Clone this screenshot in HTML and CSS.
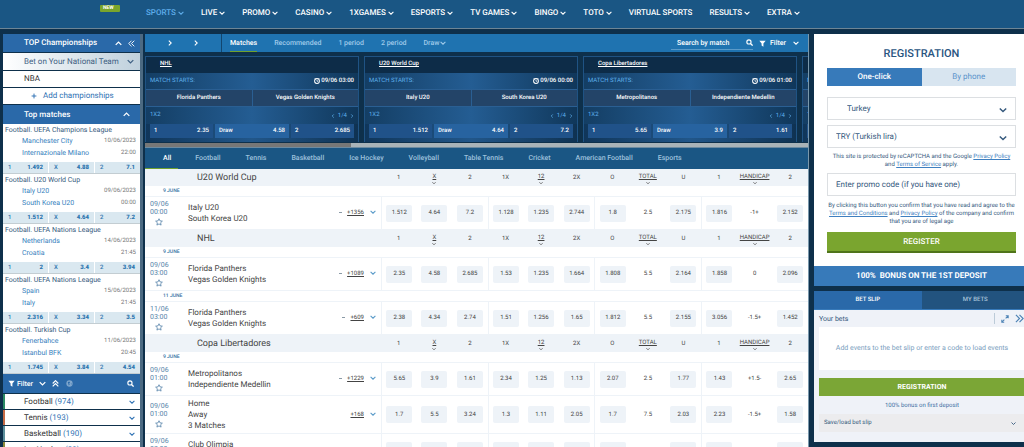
FILE: index.html
```html
<!DOCTYPE html>
<html lang="en">
<head>
<meta charset="utf-8">
<title>Sports betting</title>
<link rel="stylesheet" href="styles.css">
</head>
<body>
<svg class="sprite" aria-hidden="true">
  <symbol id="down" viewBox="0 0 10 10"><path d="M1 3l4 4 4-4" fill="none" stroke="currentColor" stroke-width="1.8"/></symbol>
  <symbol id="up" viewBox="0 0 10 10"><path d="M1 7l4-4 4 4" fill="none" stroke="currentColor" stroke-width="1.8"/></symbol>
  <symbol id="left" viewBox="0 0 10 10"><path d="M7 1L3 5l4 4" fill="none" stroke="currentColor" stroke-width="1.8"/></symbol>
  <symbol id="right" viewBox="0 0 10 10"><path d="M3 1l4 4-4 4" fill="none" stroke="currentColor" stroke-width="1.8"/></symbol>
  <symbol id="dleft" viewBox="0 0 10 10"><path d="M5 1L1 5l4 4M9 1L5 5l4 4" fill="none" stroke="currentColor" stroke-width="1.3"/></symbol>
  <symbol id="dright" viewBox="0 0 10 10"><path d="M1 1l4 4-4 4M5 1l4 4-4 4" fill="none" stroke="currentColor" stroke-width="1.3"/></symbol>
  <symbol id="dup" viewBox="0 0 10 10"><path d="M1 5l4-4 4 4M1 9l4-4 4 4" fill="none" stroke="currentColor" stroke-width="1.7"/></symbol>
  <symbol id="search" viewBox="0 0 10 10"><circle cx="4.2" cy="4.2" r="3" fill="none" stroke="currentColor" stroke-width="1.6"/><path d="M6.4 6.4L9.4 9.4" stroke="currentColor" stroke-width="1.8"/></symbol>
  <symbol id="funnel" viewBox="0 0 10 10"><path d="M.5 1h9L6.3 5v4.6L3.7 8V5z" fill="currentColor"/></symbol>
  <symbol id="clock" viewBox="0 0 10 10"><circle cx="5" cy="5" r="4" fill="none" stroke="currentColor" stroke-width="1.7"/><path d="M5 2.5V5.4H7M1 1l1.5 0M9 1H7.5" fill="none" stroke="currentColor" stroke-width="1.3"/></symbol>
  <symbol id="star" viewBox="0 0 10 10"><path d="M5 .9l1.25 2.7 2.95.35-2.2 2 .6 2.9L5 7.4 2.4 8.85l.6-2.9-2.2-2 2.95-.35z" fill="none" stroke="currentColor" stroke-width="1"/></symbol>
  <symbol id="globe" viewBox="0 0 10 10"><circle cx="5" cy="5" r="4.5" fill="currentColor"/><path d="M2.4 3.2l2.2-1 1.2 1.3-1.3 1.4.8 1.6-1.4 1.3-.5-2.3zM6.8 4.8l1.4.4-.7 1.6z" fill="#2a69a9"/></symbol>
  <symbol id="expand" viewBox="0 0 10 10"><path d="M6 1h3v3M9 1L5.8 4.2M4 9H1V6M1 9l3.2-3.2" fill="none" stroke="currentColor" stroke-width="1.3"/></symbol>
  <symbol id="plus" viewBox="0 0 10 10"><path d="M5 1v8M1 5h8" stroke="currentColor" stroke-width="1.6"/></symbol>
</svg>

<header class="top">
  <div class="brand"><span class="new">NEW</span></div>
  <nav class="nav">
    <a href="#" class="on">SPORTS<svg><use href="#down"/></svg></a>
    <a href="#">LIVE<svg><use href="#down"/></svg></a>
    <a href="#">PROMO<svg><use href="#down"/></svg></a>
    <a href="#">CASINO<svg><use href="#down"/></svg></a>
    <a href="#">1XGAMES<svg><use href="#down"/></svg></a>
    <a href="#">ESPORTS<svg><use href="#down"/></svg></a>
    <a href="#">TV GAMES<svg><use href="#down"/></svg></a>
    <a href="#">BINGO<svg><use href="#down"/></svg></a>
    <a href="#">TOTO<svg><use href="#down"/></svg></a>
    <a href="#">VIRTUAL SPORTS</a>
    <a href="#">RESULTS<svg><use href="#down"/></svg></a>
    <a href="#">EXTRA<svg><use href="#down"/></svg></a>
  </nav>
</header>

<div class="page">
  <aside class="side">
    <div class="side-head"><h2>TOP Championships</h2><button aria-label="Collapse"><svg><use href="#up"/></svg></button><button aria-label="Hide panel"><svg><use href="#dleft"/></svg></button></div>
    <button class="champ national"><span>Bet on Your National Team</span><svg><use href="#down"/></svg></button>
    <a href="#" class="champ">NBA</a>
    <button class="champ add"><svg><use href="#plus"/></svg>Add championships</button>
    <div class="side-head matches-head"><h2>Top matches</h2><button aria-label="Collapse"><svg><use href="#up"/></svg></button></div>

    <section class="match">
      <h3>Football. UEFA Champions League</h3>
      <div class="pair"><a href="#">Manchester City</a><span>10/06/2023</span></div>
      <div class="pair"><a href="#">Internazionale Milano</a><span>22:00</span></div>
      <div class="strip"><button><i>1</i><b>1.492</b></button><button><i>X</i><b>4.88</b></button><button><i>2</i><b>7.1</b></button></div>
    </section>
    <section class="match">
      <h3>Football. U20 World Cup</h3>
      <div class="pair"><a href="#">Italy U20</a><span>09/06/2023</span></div>
      <div class="pair"><a href="#">South Korea U20</a><span>00:00</span></div>
      <div class="strip"><button><i>1</i><b>1.512</b></button><button><i>X</i><b>4.64</b></button><button><i>2</i><b>7.2</b></button></div>
    </section>
    <section class="match">
      <h3>Football. UEFA Nations League</h3>
      <div class="pair"><a href="#">Netherlands</a><span>14/06/2023</span></div>
      <div class="pair"><a href="#">Croatia</a><span>21:45</span></div>
      <div class="strip"><button><i>1</i><b>2</b></button><button><i>X</i><b>3.4</b></button><button><i>2</i><b>3.94</b></button></div>
    </section>
    <section class="match">
      <h3>Football. UEFA Nations League</h3>
      <div class="pair"><a href="#">Spain</a><span>15/06/2023</span></div>
      <div class="pair"><a href="#">Italy</a><span>21:45</span></div>
      <div class="strip"><button><i>1</i><b>2.316</b></button><button><i>X</i><b>3.34</b></button><button><i>2</i><b>3.5</b></button></div>
    </section>
    <section class="match">
      <h3>Football. Turkish Cup</h3>
      <div class="pair"><a href="#">Fenerbahce</a><span>11/06/2023</span></div>
      <div class="pair"><a href="#">Istanbul BFK</a><span>20:45</span></div>
      <div class="strip"><button><i>1</i><b>1.745</b></button><button><i>X</i><b>3.84</b></button><button><i>2</i><b>4.54</b></button></div>
    </section>

    <div class="side-filter">
      <button><svg><use href="#funnel"/></svg>Filter</button>
      <button aria-label="Open filter"><svg><use href="#down"/></svg></button>
      <button aria-label="Collapse all"><svg><use href="#dup"/></svg></button>
      <button aria-label="Regions" class="globe"><svg><use href="#globe"/></svg></button>
      <button aria-label="Search" class="find"><svg><use href="#search"/></svg></button>
    </div>
    <button class="sport green"><span>Football <em>(974)</em></span><svg><use href="#down"/></svg></button>
    <button class="sport orange"><span>Tennis <em>(193)</em></span><svg><use href="#down"/></svg></button>
    <button class="sport teal"><span>Basketball <em>(190)</em></span><svg><use href="#down"/></svg></button>
    <button class="sport olive"><span>Ice Hockey <em>(29)</em></span><svg><use href="#down"/></svg></button>
  </aside>

  <main class="main">
    <div class="bar">
      <div class="arrows"><button aria-label="Next"><svg><use href="#right"/></svg></button><button aria-label="Last"><svg><use href="#right"/></svg></button></div>
      <nav class="periods">
        <a href="#" class="on">Matches</a><a href="#">Recommended</a><a href="#">1 period</a><a href="#">2 period</a><a href="#">Draw<svg><use href="#down"/></svg></a>
      </nav>
      <div class="search"><input type="text" placeholder="Search by match" aria-label="Search by match"><svg><use href="#search"/></svg></div>
      <button class="filter"><svg><use href="#funnel"/></svg>Filter<svg class="chev"><use href="#down"/></svg></button>
    </div>

    <div class="cards">
      <article class="card">
        <h3><a href="#">NHL</a></h3>
        <div class="starts"><span>MATCH STARTS:</span><time><svg><use href="#clock"/></svg>09/06 03:00</time></div>
        <div class="teams"><span>Florida Panthers</span><span>Vegas Golden Knights</span></div>
        <div class="market"><span>1X2</span><span class="pager"><svg><use href="#left"/></svg>1/4<svg><use href="#right"/></svg></span></div>
        <div class="odds"><button><span>1</span><span>2.35</span></button><button class="wide"><span>Draw</span><span>4.58</span></button><button><span>2</span><span>2.685</span></button></div>
      </article>
      <article class="card">
        <h3><a href="#">U20 World Cup</a></h3>
        <div class="starts"><span>MATCH STARTS:</span><time><svg><use href="#clock"/></svg>09/06 00:00</time></div>
        <div class="teams"><span>Italy U20</span><span>South Korea U20</span></div>
        <div class="market"><span>1X2</span><span class="pager"><svg><use href="#left"/></svg>1/4<svg><use href="#right"/></svg></span></div>
        <div class="odds"><button><span>1</span><span>1.512</span></button><button class="wide"><span>Draw</span><span>4.64</span></button><button><span>2</span><span>7.2</span></button></div>
      </article>
      <article class="card">
        <h3><a href="#">Copa Libertadores</a></h3>
        <div class="starts"><span>MATCH STARTS:</span><time><svg><use href="#clock"/></svg>09/06 01:00</time></div>
        <div class="teams"><span>Metropolitanos</span><span>Independiente Medellin</span></div>
        <div class="market"><span>1X2</span><span class="pager"><svg><use href="#left"/></svg>1/4<svg><use href="#right"/></svg></span></div>
        <div class="odds"><button><span>1</span><span>5.65</span></button><button class="wide"><span>Draw</span><span>3.9</span></button><button><span>2</span><span>1.61</span></button></div>
      </article>
      <article class="card">
        <h3></h3>
        <div class="starts"><span>MATCH STARTS:</span></div>
        <div class="teams"><span></span><span></span></div>
        <div class="market"><span>1X2</span></div>
        <div class="odds"><button aria-label="Home win"></button></div>
      </article>
    </div>
    <div class="track"><div class="thumb"></div></div>

    <nav class="sports">
      <a href="#" class="on">All</a><a href="#">Football</a><a href="#">Tennis</a><a href="#">Basketball</a><a href="#">Ice Hockey</a><a href="#">Volleyball</a><a href="#">Table Tennis</a><a href="#">Cricket</a><a href="#">American Football</a><a href="#">Esports</a>
    </nav>

    <table class="events">
      <colgroup><col class="c-time"><col class="c-name"><col class="c-more"><col span="12"></colgroup>
      <tbody>
      <tr class="league"><th></th><th colspan="2" class="title">U20 World Cup</th><th>1</th><th><u>X</u><svg><use href="#down"/></svg></th><th>2</th><th>1X</th><th><u>12</u><svg><use href="#down"/></svg></th><th>2X</th><th>O</th><th><u>TOTAL</u><svg><use href="#down"/></svg></th><th>U</th><th>1</th><th><u>HANDICAP</u><svg><use href="#down"/></svg></th><th>2</th></tr>
      <tr class="date"><td colspan="15">9 JUNE</td></tr>
      <tr class="event"><td class="when">09/06<br>00:00<svg><use href="#star"/></svg></td><td class="names">Italy U20<br>South Korea U20</td><td class="more"><i></i><a href="#">+1356</a><svg><use href="#down"/></svg></td><td class="g"><button>1.512</button></td><td><button>4.64</button></td><td><button>7.2</button></td><td class="g"><button>1.128</button></td><td><button>1.235</button></td><td><button>2.744</button></td><td class="g"><button>1.8</button></td><td>2.5</td><td><button>2.175</button></td><td class="g"><button>1.816</button></td><td>-1+</td><td><button>2.152</button></td></tr>

      <tr class="league"><th></th><th colspan="2" class="title">NHL</th><th>1</th><th><u>X</u><svg><use href="#down"/></svg></th><th>2</th><th>1X</th><th><u>12</u><svg><use href="#down"/></svg></th><th>2X</th><th>O</th><th><u>TOTAL</u><svg><use href="#down"/></svg></th><th>U</th><th>1</th><th><u>HANDICAP</u><svg><use href="#down"/></svg></th><th>2</th></tr>
      <tr class="date"><td colspan="15">9 JUNE</td></tr>
      <tr class="event"><td class="when">09/06<br>03:00<svg><use href="#star"/></svg></td><td class="names">Florida Panthers<br>Vegas Golden Knights</td><td class="more"><i></i><a href="#">+1089</a><svg><use href="#down"/></svg></td><td class="g"><button>2.35</button></td><td><button>4.58</button></td><td><button>2.685</button></td><td class="g"><button>1.53</button></td><td><button>1.235</button></td><td><button>1.664</button></td><td class="g"><button>1.808</button></td><td>5.5</td><td><button>2.164</button></td><td class="g"><button>1.858</button></td><td>0</td><td><button>2.096</button></td></tr>
      <tr class="date"><td colspan="15">11 JUNE</td></tr>
      <tr class="event"><td class="when">11/06<br>03:00<svg><use href="#star"/></svg></td><td class="names">Florida Panthers<br>Vegas Golden Knights</td><td class="more"><i></i><a href="#">+609</a><svg><use href="#down"/></svg></td><td class="g"><button>2.38</button></td><td><button>4.34</button></td><td><button>2.74</button></td><td class="g"><button>1.51</button></td><td><button>1.256</button></td><td><button>1.65</button></td><td class="g"><button>1.812</button></td><td>5.5</td><td><button>2.155</button></td><td class="g"><button>3.056</button></td><td>-1.5+</td><td><button>1.452</button></td></tr>

      <tr class="league"><th></th><th colspan="2" class="title">Copa Libertadores</th><th>1</th><th><u>X</u><svg><use href="#down"/></svg></th><th>2</th><th>1X</th><th><u>12</u><svg><use href="#down"/></svg></th><th>2X</th><th>O</th><th><u>TOTAL</u><svg><use href="#down"/></svg></th><th>U</th><th>1</th><th><u>HANDICAP</u><svg><use href="#down"/></svg></th><th>2</th></tr>
      <tr class="date"><td colspan="15">9 JUNE</td></tr>
      <tr class="event"><td class="when">09/06<br>01:00<svg><use href="#star"/></svg></td><td class="names">Metropolitanos<br>Independiente Medellin</td><td class="more"><i></i><a href="#">+1229</a><svg><use href="#down"/></svg></td><td class="g"><button>5.65</button></td><td><button>3.9</button></td><td><button>1.61</button></td><td class="g"><button>2.34</button></td><td><button>1.25</button></td><td><button>1.13</button></td><td class="g"><button>2.07</button></td><td>2.5</td><td><button>1.77</button></td><td class="g"><button>1.43</button></td><td>+1.5-</td><td><button>2.65</button></td></tr>
      <tr class="event tall"><td class="when">09/06<br>01:00<svg><use href="#star"/></svg></td><td class="names">Home<br>Away<br>3 Matches</td><td class="more"><a href="#">+168</a><svg><use href="#down"/></svg></td><td class="g"><button>1.7</button></td><td><button>5.5</button></td><td><button>3.24</button></td><td class="g"><button>1.3</button></td><td><button>1.11</button></td><td><button>2.05</button></td><td class="g"><button>1.7</button></td><td>7.5</td><td><button>2.03</button></td><td class="g"><button>2.23</button></td><td>-1.5+</td><td><button>1.58</button></td></tr>
      <tr class="event"><td class="when">09/06<br>03:00<svg><use href="#star"/></svg></td><td class="names">Club Olimpia<br>&nbsp;</td><td class="more"></td><td class="g"><button></button></td><td><button></button></td><td><button></button></td><td class="g"><button></button></td><td><button></button></td><td><button></button></td><td class="g"><button></button></td><td></td><td><button></button></td><td class="g"><button></button></td><td></td><td><button></button></td></tr>
      </tbody>
    </table>
  </main>

  <aside class="right">
    <form class="register">
      <h2>REGISTRATION</h2>
      <div class="modes"><button type="button" class="on">One-click</button><button type="button">By phone</button></div>
      <div class="select country"><select aria-label="Country"><option>Turkey</option></select><svg><use href="#down"/></svg></div>
      <div class="select"><select aria-label="Currency"><option>TRY (Turkish lira)</option></select><svg><use href="#down"/></svg></div>
      <p class="captcha">This site is protected by reCAPTCHA and the Google <a href="#">Privacy Policy</a> and <a href="#">Terms of Service</a> apply.</p>
      <input type="text" class="promo" placeholder="Enter promo code (if you have one)" aria-label="Promo code">
      <p class="terms">By clicking this button you confirm that you have read and agree to the <a href="#">Terms and Conditions</a> and <a href="#">Privacy Policy</a> of the company and confirm that you are of legal age</p>
      <button type="submit" class="submit">REGISTER</button>
    </form>
    <a href="#" class="bonus">100%&nbsp; BONUS ON THE 1ST DEPOSIT</a>
    <section class="slip">
      <div class="slip-tabs"><button class="on">BET SLIP</button><button>MY BETS</button></div>
      <div class="slip-body">
        <div class="slip-head"><h3>Your bets</h3><button aria-label="Expand" class="expand"><svg><use href="#expand"/></svg></button><button aria-label="Hide" class="hide"><svg><use href="#dright"/></svg></button></div>
        <p class="empty">Add events to the bet slip or enter a code to load events</p>
        <button class="reg">REGISTRATION</button>
        <p class="first">100% bonus on first deposit</p>
        <button class="save"><span>Save/load bet slip</span><svg><use href="#down"/></svg></button>
      </div>
    </section>
    <div class="tiles"><div></div><div></div></div>
  </aside>
</div>
</body>
</html>
```

FILE: styles.css
```css
* { box-sizing: border-box; margin: 0; padding: 0; }
body {
  height: 100vh; overflow: hidden; display: flex; flex-direction: column;
  background: #0e304b; color: #444; font: 8px/12px Roboto, Arial, sans-serif;
  text-rendering: geometricPrecision;
}
a { color: inherit; text-decoration: none; }
button, input, select { border: 0; background: none; color: inherit; font: inherit; text-rendering: inherit; }
button { display: flex; align-items: center; }
h2, h3 { font: inherit; }
i, em { font-style: normal; }
svg { flex: none; display: block; width: 7px; height: 7px; }
.sprite { position: absolute; width: 0; height: 0; }

.top { display: flex; flex: none; height: 29px; background: #1a5684; border-bottom: 1px solid #6d8595; }
.brand { width: 146px; padding: 5px 0 0 100px; }
.new { display: block; width: 20px; height: 7px; padding-left: 3px; border-radius: 1px; background: #7aa52b; color: #fff; font-size: 5px; font-weight: 700; line-height: 7px; }
.nav { display: flex; gap: 17px; align-items: center; padding-bottom: 2px; color: #fff; font-weight: 500; white-space: nowrap; }
.nav a { display: flex; align-items: center; gap: 2px; }
.nav svg { width: 6px; height: 6px; }
.nav .on { color: #5fadea; }

.page { display: flex; align-items: flex-start; padding: 5px 0 0 3px; }

.side { flex: none; width: 140px; border-right: 3px solid #4c6a82; }
.side-head { display: flex; align-items: center; gap: 6px; height: 18px; padding: 0 5px 0 21px; background: #2a69a9; color: #fff; font-size: 8px; }
.side-head h2 { flex: 1; font-weight: 500; }
.matches-head { height: 19px; padding-right: 10px; }
.champ { display: flex; align-items: center; width: 100%; height: 16px; margin-bottom: 1px; padding-left: 21px; background: #fff; color: #333; font-size: 8px; white-space: nowrap; }
.national { height: 17px; margin-top: 1px; padding-right: 6px; justify-content: space-between; background: linear-gradient(90deg, #fff, #bfd0dc); color: #3f6183; }
.add { gap: 6px; padding-left: 28px; color: #2f72b4; }
.add svg { width: 6px; height: 6px; }
.match { height: 50px; background: #fff; }
.match h3 { padding: 1px 0 0 2px; font-size: 7px; line-height: 10px; color: #35597d; }
.pair { display: flex; justify-content: space-between; padding: 0 4px 0 19px; color: #3580bd; font-size: 7px; line-height: 12px; }
.pair span { color: #777; font-size: 6px; }
.strip { display: flex; gap: 1px; margin-top: 3px; height: 12px; border-bottom: 1px solid #c3cdd2; }
.strip button { flex: 1; justify-content: space-between; padding: 0 5px; background: #dae8f0; color: #2d75af; font-size: 6px; font-weight: 700; }
.strip i { font-weight: 500; }
.side-filter { display: flex; align-items: center; gap: 6px; height: 19px; margin-bottom: 1px; padding: 0 6px 0 5px; background: #2a69a9; color: #fff; font-size: 7px; font-weight: 500; }
.side-filter button { gap: 2px; }
.globe { margin-left: 1px; color: #7fa6cc; }
.find { margin-left: auto; }
.sport { width: 100%; height: 15px; margin-bottom: 1px; padding: 0 5px 0 19px; justify-content: space-between; border-left: 2px solid; background: #fff; font-size: 8px; }
.sport span { color: #333; }
.sport em { color: #2f72b4; }
.sport svg { width: 6px; height: 6px; color: #2f72b4; }
.green { border-color: #2a8a65; }
.orange { border-color: #c46a45; }
.teal { border-color: #5c8f9c; }
.olive { border-color: #8c8a3a; }

.main { flex: 1; min-width: 0; margin-left: 2px; border-right: 1px solid #7a98ac; }
.bar { display: flex; height: 18px; background: #1f73b0; color: #fff; font-size: 7px; font-weight: 500; }
.arrows { display: flex; flex: none; width: 77px; padding-left: 22px; gap: 20px; border-right: 1px solid #12466f; }
.arrows svg { width: 6px; height: 6px; }
.periods { display: flex; flex: 1; gap: 17px; padding-left: 8px; color: #9fcaea; line-height: 18px; }
.periods a { display: flex; align-items: center; height: 18px; }
.periods svg { width: 6px; height: 6px; margin-left: 1px; }
.periods .on { color: #fff; border-bottom: 1px solid #6fa12e; }
.search { display: flex; align-items: center; width: 82px; height: 16px; padding-top: 2px; border-bottom: 1px solid #5b9bc9; }
.search input { flex: 1; min-width: 0; padding-left: 6px; outline: 0; }
.search input::placeholder { color: #fff; }
.filter { gap: 4px; padding: 0 9px 0 6px; }
.filter .chev { margin-left: 3px; width: 6px; height: 6px; }

.cards { display: flex; gap: 5px; overflow: hidden; margin-top: 4px; }
.card { flex: none; width: 214px; height: 86px; border: 1px solid #1f5384; color: #fff; font-size: 6px; line-height: 16px; background: #0e304b; }
.card h3 { height: 16px; padding-left: 14px; line-height: 14px; background: #0d2c48; text-decoration: underline; font-weight: 500; }
.starts, .market { display: flex; justify-content: space-between; padding: 0 4px; background: linear-gradient(90deg, #143e64, #245d93 50%, #10375a); white-space: nowrap; }
.starts { height: 17px; border-bottom: 1px solid #2a5f93; color: #5fb0ec; }
.starts time { display: flex; align-items: center; gap: 1px; color: #fff; font-weight: 500; }
.starts svg { width: 6px; height: 6px; }
.teams { display: flex; height: 17px; background: #234468; border-bottom: 1px solid #2a5f93; text-align: center; font-weight: 500; }
.teams span { flex: 1; }
.teams span + span { border-left: 1px solid #2a5f93; }
.market { height: 17px; color: #5fb0ec; }
.pager { display: flex; align-items: center; gap: 3px; }
.pager svg { width: 4px; height: 4px; }
.odds { display: flex; gap: 2px; height: 18px; padding: 0 4px 4px; background: linear-gradient(90deg, #10365a, #215689 50%, #0f3252); }
.odds button { flex: 1; height: 14px; padding: 0 4px; justify-content: space-between; background: #205289; font-weight: 500; }
.odds .wide { flex: 1.2; background: #2763a0; }
.track { height: 5px; margin: 1px 0 0; background: #a9b3b8; border-bottom: 1px solid #6c8ba1; }
.thumb { width: 31%; height: 4px; background: #777; }

.sports { display: flex; height: 21px; gap: 25px; padding-right: 20px; background: #1a5684; color: #9ec1dc; font-size: 7px; font-weight: 500; line-height: 20px; white-space: nowrap; }
.sports .on { padding: 0 7px 0 18px; margin-right: -8px; color: #fff; border-bottom: 1px solid #6fa12e; }

.events { width: 100%; table-layout: fixed; border-collapse: separate; border-spacing: 0; background: #fff; font-size: 6px; text-align: center; }
.c-time { width: 40px; }
.c-name { width: 144px; }
.c-more { width: 52px; }
.league th { height: 17px; background: #eef3f8; color: #444; font-weight: 400; line-height: 8px; }
.league .title { padding-left: 12px; color: #444; font-size: 9px; text-align: left; }
.league u { display: block; height: 8px; text-decoration: underline; }
.league th:has(u) { padding-top: 3px; }
.league svg { width: 4px; height: 4px; margin: 0 auto; }
.date td { height: 11px; padding-left: 18px; color: #35719f; font-size: 5px; font-weight: 500; line-height: 10px; text-align: left; border-bottom: 1px solid #eef3f8; }
.event td { height: 33px; border-bottom: 1px solid #eef3f8; }
.event.tall td { height: 38px; }
.event .g { border-left: 1px solid #eef3f8; }
.event .when { padding-left: 5px; color: #5482a8; font-size: 7px; line-height: 8px; text-align: left; }
.when svg { width: 8px; height: 8px; margin: 2px 0 0 5px; }
.event .names { padding-left: 3px; font-size: 8px; line-height: 11px; text-align: left; }
.more { white-space: nowrap; text-align: right; }
.more i { display: inline-block; width: 3px; height: 1px; margin-right: 5px; background: #8a9aa6; vertical-align: middle; }
.more a { text-decoration: underline; }
.more svg { display: inline-block; width: 6px; height: 6px; margin: 0 5px 0 6px; color: #5b9bc9; vertical-align: middle; }
.event button { width: 26px; height: 17px; margin: 0 auto; justify-content: center; border-radius: 2px; background: #eef3f8; }

.right { flex: none; width: 215px; margin: 0 -5px 0 5px; }
.register { padding: 13px; background: #fff; color: #35597d; text-align: center; }
.register h2 { height: 14px; font-size: 11px; font-weight: 500; line-height: 14px; color: #29547f; }
.modes { display: grid; grid-template-columns: 1fr 1fr; height: 18px; margin: 7px 0 11px; background: #d8e5f0; color: #5a93cb; }
.modes button { justify-content: center; }
.modes .on { background: #377aba; color: #fff; font-weight: 500; }
.select { position: relative; height: 23px; margin-bottom: 5px; border: 1px solid #dcdfe2; }
.select select { width: 100%; height: 100%; padding-left: 8px; appearance: none; }
.country select { padding-left: 19px; }
.select svg { position: absolute; top: 8px; right: 8px; width: 8px; height: 8px; pointer-events: none; }
.captcha, .terms { font-size: 6px; line-height: 8px; }
.captcha { padding: 0 3px; }
.register p a { color: #3f7fc0; text-decoration: underline; }
.promo { display: block; width: 100%; height: 23px; margin: 4px 0 6px; padding-left: 8px; border: 1px solid #dcdfe2; }
.promo::placeholder { color: #35597d; }
.submit { width: 100%; height: 21px; margin-top: 6px; justify-content: center; background: #7aa52f; border-bottom: 2px solid #4f741a; color: #fff; font-weight: 500; }
.bonus { display: block; height: 20px; background: #377aba; color: #fff; font-weight: 700; line-height: 19px; text-align: center; }
.slip { margin-top: 5px; background: #eff2f8; }
.slip-tabs { display: grid; grid-template-columns: 1fr 1fr; height: 19px; background: #22537f; color: #a9c3da; font-size: 6px; border-bottom: 1px solid #377aba; font-weight: 500; }
.slip-tabs button { justify-content: center; }
.slip-tabs .on { background: #2a69a9; color: #fff; }
.slip-body { padding: 0 4px 10px 5px; color: #35597d; }
.slip-head { display: flex; align-items: center; height: 17px; font-size: 7px; }
.slip-head h3 { flex: 1; }
.slip-head button { color: #4d83b5; }
.expand { padding-left: 6px; border-left: 1px solid #bccbd8; height: 11px; }
.slip-head .expand svg { width: 8px; height: 8px; }
.hide { padding: 0 1px 0 6px; }
.hide svg { width: 9px; height: 9px; }
.empty { height: 43px; background: #fff; color: #7ba0c0; font-size: 7px; line-height: 43px; text-align: center; }
.reg { width: 100%; height: 18px; margin-top: 8px; justify-content: center; background: #7ba636; color: #fff; font-size: 7px; font-weight: 700; }
.first { height: 18px; font-size: 6px; line-height: 20px; color: #3d6fa3; text-align: center; }
.save { width: 100%; height: 18px; padding: 0 9px 0 5px; justify-content: space-between; background: #ececee; font-size: 6px; }
.save svg { width: 5px; height: 5px; }
.tiles { display: grid; grid-template-columns: 1fr 1fr; gap: 5px; margin-top: 5px; }
.tiles div { height: 20px; background: #1a4266; }
```
